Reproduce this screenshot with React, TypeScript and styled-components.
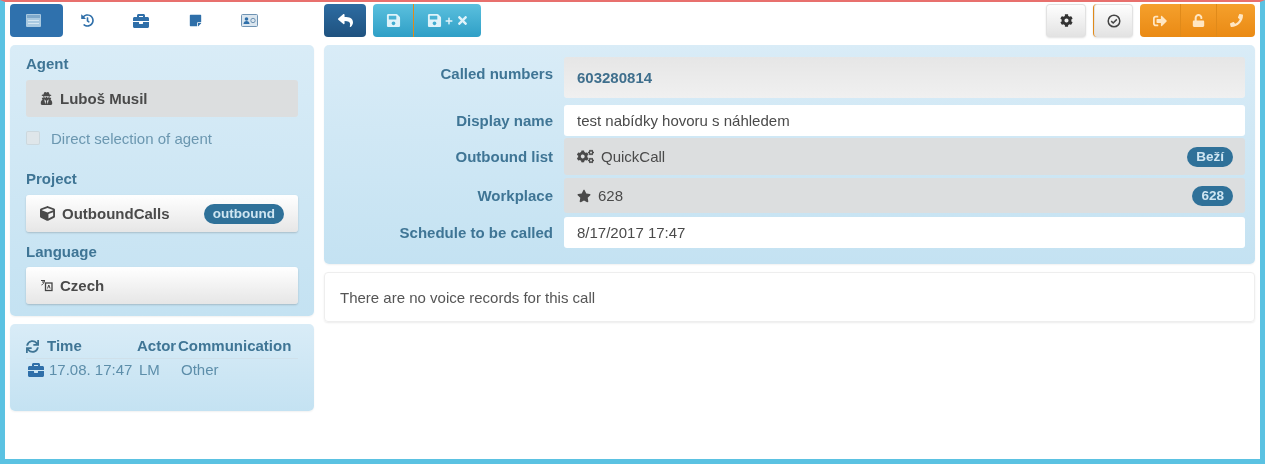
import React from 'react';
import styled, { createGlobalStyle } from 'styled-components';
import {
  FaBriefcase, FaCog, FaCogs, FaCube, FaHistory, FaPhone, FaPlus,
  FaSave, FaReply, FaSignOutAlt, FaStar, FaStickyNote, FaSync, FaTimes, FaUnlock, FaUserSecret,
} from 'react-icons/fa';

const GlobalStyle = createGlobalStyle`
  html, body { margin: 0; padding: 0; height: 100%; }
  body { font-family: "Liberation Sans", Arial, sans-serif; font-size: 15px; color: #555; background: #fff; }
`;

const Frame = styled('div')`
  box-sizing: border-box;
  width: 1265px;
  height: 464px;
  overflow: hidden;
  background: #fff;
  border-top: 2px solid #e8706d;
  border-left: 5px solid #5bc2e2;
  border-right: 5px solid #5bc2e2;
  border-bottom: 5px solid #5bc2e2;
  padding: 2px 5px 0;
  display: grid;
  grid-template-columns: 304px 931px;
  column-gap: 10px;
  filter: blur(0.4px);
`;

const Column = styled('div')`
  display: flex;
  flex-direction: column;
`;

const Toolbar = styled('div')`
  height: 33px;
  margin-bottom: 8px;
  display: flex;
  align-items: stretch;
  gap: 7px;
`;

const Tabs = styled('div')`
  display: flex;
  gap: 1px;
  height: 33px;
  margin-bottom: 8px;
`;

const Tab = styled('div')<{ $active?: boolean }>`
  box-sizing: border-box;
  width: 53px;
  padding-right: 7px;
  border-radius: 4px;
  display: flex;
  align-items: center;
  justify-content: center;
  color: #2f6fa9;
  background: ${_ => _.$active ? '#2f71ad' : 'transparent'};
`;

const ButtonGroup = styled('div')`
  display: flex;
  border-radius: 4px;
  overflow: hidden;
`;

const Btn = styled('div')<{ $kind: 'dark' | 'info' | 'plain' | 'warn'; $w: number }>`
  width: ${_ => _.$w}px;
  box-sizing: border-box;
  display: flex;
  align-items: center;
  justify-content: center;
  gap: 3px;
  border-radius: ${_ => _.$kind === 'dark' || _.$kind === 'plain' ? '4px' : '0'};
  color: ${_ => ({ dark: '#fff', info: '#dff3fa', plain: '#333', warn: '#ffe6c2' }[_.$kind])};
  background: ${_ => ({
    dark: 'linear-gradient(#2d6ca2, #1f527f)',
    info: 'linear-gradient(#5bc0de, #2f9fc6)',
    plain: 'linear-gradient(#fff, #e2e2e2)',
    warn: 'linear-gradient(#f5a02c, #ea8a14)',
  }[_.$kind])};
  box-shadow: ${_ => _.$kind === 'plain' ? 'inset 0 0 0 1px #e2e2e2, 0 1px 2px rgba(0,0,0,.12)' : 'none'};
  & + & { border-left: ${_ => _.$kind === 'info' ? '1px solid #3fa3c6' : _.$kind === 'warn' ? '1px solid #e08a1a' : '0'}; }
`;

const Spacer = styled('div')`
  flex: 1;
`;

const Well = styled('div')`
  background: linear-gradient(#d9ecf7, #c4e2f2);
  border-radius: 5px;
  box-shadow: 0 1px 2px rgba(0,0,0,.06);
`;

const AgentWell = styled(Well)`
  box-sizing: border-box;
  height: 271px;
  padding: 11px 16px 0;
`;

const Label = styled('div')<{ $top?: number; $bottom?: number }>`
  font-weight: bold;
  line-height: 16px;
  color: #3f7595;
  margin-top: ${_ => _.$top ?? 0}px;
  margin-bottom: ${_ => _.$bottom ?? 8}px;
`;

const SideField = styled('div')<{ $readonly?: boolean }>`
  box-sizing: border-box;
  height: 37px;
  border-radius: 3px;
  padding: 0 14px;
  display: flex;
  align-items: center;
  gap: 7px;
  font-weight: bold;
  color: #4a4a4a;
  background: ${_ => _.$readonly ? '#dcdedf' : 'linear-gradient(#fff, #e6e6e6)'};
  box-shadow: ${_ => _.$readonly ? 'none' : '0 1px 2px rgba(0,0,0,.18)'};
`;

const CheckRow = styled('label')`
  display: flex;
  align-items: center;
  gap: 11px;
  margin-top: 13px;
  height: 16px;
  color: #6b97b0;
`;

const Check = styled('span')`
  width: 14px;
  height: 14px;
  background: #dfe6ea;
  border-radius: 2px;
  box-shadow: inset 0 0 0 1px #ccd8de;
`;

const Badge = styled('span')`
  margin-left: auto;
  background: #2f7199;
  color: #cfe6f2;
  border-radius: 10px;
  padding: 0 9px;
  height: 20px;
  line-height: 20px;
  font-size: 13.5px;
  font-weight: bold;
`;

const HistoryWell = styled(Well)`
  box-sizing: border-box;
  height: 87px;
  margin-top: 8px;
  padding: 14px 16px 0;
`;

const HistoryHead = styled('div')`
  display: grid;
  grid-template-columns: 111px 41px 1fr;
  height: 20px;
  line-height: 16px;
  font-weight: bold;
  color: #3f7595;
  border-bottom: 1px solid #cfe0ea;
  white-space: nowrap;
`;

const HistoryRow = styled('div')`
  display: grid;
  grid-template-columns: 113px 42px 1fr;
  margin-top: 3px;
  line-height: 16px;
  color: #5d8eaa;
  white-space: nowrap;
  & svg { color: #2f6fa9; }
`;

const IconText = styled('span')<{ $gap: number; $left?: number }>`
  display: flex;
  align-items: center;
  height: 16px;
  gap: ${_ => _.$gap}px;
  margin-left: ${_ => _.$left ?? 0}px;
`;

const FormWell = styled(Well)`
  box-sizing: border-box;
  height: 219px;
  padding: 12px 10px 0 0;
  display: grid;
  grid-template-columns: 229px 1fr;
  grid-template-rows: 46px 31px 38px 37px 31px;
  row-gap: 2px;
  column-gap: 11px;
`;

const FormLabel = styled('div')<{ $h: number; $alignTop?: boolean }>`
  height: ${_ => _.$h}px;
  font-weight: bold;
  color: #3f7595;
  display: flex;
  justify-content: flex-end;
  align-items: ${_ => _.$alignTop ? 'flex-start' : 'center'};
  padding-top: ${_ => _.$alignTop ? '8px' : '0'};
`;

const FormField = styled('div')<{ $look: 'called' | 'input' | 'grey'; $h: number }>`
  box-sizing: border-box;
  height: ${_ => _.$h}px;
  padding: 0 12px 0 13px;
  display: flex;
  align-items: center;
  gap: 7px;
  border-radius: 3px;
  color: ${_ => _.$look === 'called' ? '#3f6f8d' : '#4a4a4a'};
  font-weight: ${_ => _.$look === 'called' ? 'bold' : 'normal'};
  background: ${_ => ({ called: 'linear-gradient(#e6e6e6, #f0f0f0)', input: '#fff', grey: '#dcdedf' }[_.$look])};
`;

const VoiceCard = styled('div')`
  box-sizing: border-box;
  height: 50px;
  margin-top: 8px;
  padding: 0 15px;
  display: flex;
  align-items: center;
  border: 1px solid #eee;
  border-radius: 4px;
  box-shadow: 0 1px 2px rgba(0,0,0,.08);
`;

const App = () => (
  <>
    <GlobalStyle />
    <Frame>
      <Column>
        <Tabs>
          <Tab $active>
            <svg width="15" height="13" viewBox="0 0 15 13">
              <rect width="15" height="13" rx="1" fill="#a9c9e0" />
              <rect x="1" y="1" width="13" height="3" fill="#7fa9cb" />
              <rect x="2" y="6" width="11" height="1" fill="#d5e6f1" />
              <rect x="2" y="9" width="11" height="1" fill="#d5e6f1" />
            </svg>
          </Tab>
          <Tab><FaHistory size={13} /></Tab>
          <Tab><FaBriefcase size={16} /></Tab>
          <Tab><FaStickyNote size={13} /></Tab>
          <Tab>
            <svg width="17" height="13" viewBox="0 0 17 13">
              <rect x="0.5" y="0.5" width="16" height="12" rx="1" fill="#dbe6ef" stroke="#6f93b3" />
              <circle cx="5.5" cy="5" r="1.8" fill="#2f6fa9" />
              <path d="M2.5 10c0-2 1.4-3 3-3s3 1 3 3z" fill="#2f6fa9" />
              <circle cx="12" cy="6.5" r="2.2" fill="none" stroke="#6f93b3" />
            </svg>
          </Tab>
        </Tabs>
        <AgentWell>
          <Label>Agent</Label>
          <SideField $readonly><FaUserSecret size={13} />Luboš Musil</SideField>
          <CheckRow><Check />Direct selection of agent</CheckRow>
          <Label $top={25}>Project</Label>
          <SideField><FaCube size={15} />OutboundCalls<Badge>outbound</Badge></SideField>
          <Label $top={12} $bottom={7}>Language</Label>
          <SideField>
            <svg width="13" height="13" viewBox="0 0 13 13" fill="none" stroke="#444" strokeWidth="1.3">
              <path d="M1 1.5h4M3 1v3M1.5 6c1.500-.5 2.500-2 3-4" strokeWidth="1" />
              <rect x="5.500" y="4" width="6.500" height="7.500" fill="#f3f3f3" />
              <path d="M7.500 9.500 8.800 6l1.300 3.500" strokeWidth="1" />
            </svg>
            Czech
          </SideField>
        </AgentWell>
        <HistoryWell>
          <HistoryHead>
            <IconText $gap={8}><FaSync size={13} />Time</IconText>
            <span>Actor</span>
            <span>Communication</span>
          </HistoryHead>
          <HistoryRow>
            <IconText $gap={5} $left={2}><FaBriefcase size={16} />17.08. 17:47</IconText>
            <span>LM</span>
            <span>Other</span>
          </HistoryRow>
        </HistoryWell>
      </Column>
      <Column>
        <Toolbar>
          <Btn $kind="dark" $w={42}><FaReply size={15} /></Btn>
          <ButtonGroup>
            <Btn $kind="info" $w={40}><FaSave size={15} /></Btn>
            <Btn $kind="info" $w={68}><FaSave size={15} /><FaPlus size={8} /><FaTimes size={13} /></Btn>
          </ButtonGroup>
          <Spacer />
          <Btn $kind="plain" $w={40}><FaCog size={13} /></Btn>
          <Btn $kind="plain" $w={40}>
            <svg width="14" height="14" viewBox="0 0 14 14" fill="none" stroke="#444" strokeWidth="1.5">
              <circle cx="7" cy="7" r="5.800" />
              <path d="M4.200 7.100 6.200 9 9.800 5.400" />
            </svg>
          </Btn>
          <ButtonGroup>
            <Btn $kind="warn" $w={40}><FaSignOutAlt size={14} /></Btn>
            <Btn $kind="warn" $w={36}><FaUnlock size={13} /></Btn>
            <Btn $kind="warn" $w={39}><FaPhone size={13} /></Btn>
          </ButtonGroup>
        </Toolbar>
        <FormWell>
          <FormLabel $h={46} $alignTop>Called numbers</FormLabel>
          <FormField $look="called" $h={41}>603280814</FormField>
          <FormLabel $h={31}>Display name</FormLabel>
          <FormField $look="input" $h={31}>test nabídky hovoru s náhledem</FormField>
          <FormLabel $h={37}>Outbound list</FormLabel>
          <FormField $look="grey" $h={37}><FaCogs size={17} />QuickCall<Badge>Beží</Badge></FormField>
          <FormLabel $h={35}>Workplace</FormLabel>
          <FormField $look="grey" $h={35}><FaStar size={14} />628<Badge>628</Badge></FormField>
          <FormLabel $h={31}>Schedule to be called</FormLabel>
          <FormField $look="input" $h={31}>8/17/2017 17:47</FormField>
        </FormWell>
        <VoiceCard>There are no voice records for this call</VoiceCard>
      </Column>
    </Frame>
  </>
);

export default App;
